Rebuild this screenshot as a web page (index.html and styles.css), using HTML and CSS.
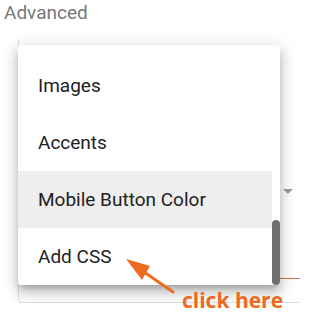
FILE: index.html
```html
<!DOCTYPE html>
<html>
<head>
<meta charset="utf-8">
<link rel="stylesheet" href="styles.css">
</head>
<body>
<div class="page">
  <div class="heading">Advanced</div>
  <div class="area">
    <div class="field">
      <div class="caret"></div>
      <div class="underline"></div>
    </div>
    <div class="menu">
      <ul class="list">
        <li class="item">Images</li>
        <li class="item">Accents</li>
        <li class="item active">Mobile Button Color</li>
        <li class="item">Add CSS</li>
      </ul>
      <div class="track"><div class="thumb"></div></div>
    </div>
  </div>
  <svg class="arrow" width="60" height="45" viewBox="0 0 60 45">
    <line x1="53" y1="40" x2="24" y2="20" stroke="#ee6a1f" stroke-width="3" stroke-linecap="round"/>
    <polygon points="6,7 30,14 22,28" fill="#ee6a1f"/>
  </svg>
  <div class="note">click here</div>
</div>
</body>
</html>
```
FILE: styles.css
```css
html, body {
  margin: 0;
  padding: 0;
  background: #ffffff;
}
.page {
  position: relative;
  width: 300px;
  height: 317px;
  overflow: hidden;
  font-family: Roboto, "Liberation Sans", sans-serif;
}
.heading {
  font-size: 19px;
  line-height: 26px;
  color: #777777;
  padding-left: 4px;
}
.area {
  position: relative;
  padding-top: 14px;
}
.field {
  margin-left: 18px;
  width: 290px;
  height: 263px;
  box-sizing: border-box;
  border: 1px solid #dedede;
  border-top: none;
  border-radius: 0 0 4px 4px;
  background: #ffffff;
  padding-top: 1px;
}
.caret {
  width: 0;
  height: 0;
  margin: 148px 14px 0 auto;
  border-left: 5.5px solid transparent;
  border-right: 5.5px solid transparent;
  border-top: 5px solid #9e9e9e;
}
.underline {
  margin-top: 84px;
  margin-left: 261px;
  height: 1px;
  background: #d9744a;
}
.menu {
  position: absolute;
  left: 18px;
  top: 19px;
  width: 262px;
  height: 240px;
  box-sizing: border-box;
  background: #ffffff;
  border-radius: 3px;
  display: flex;
  box-shadow: 0 5px 6px -3px rgba(0,0,0,0.22), 0 8px 12px 1px rgba(0,0,0,0.14), 0 3px 16px 3px rgba(0,0,0,0.12);
}
.list {
  list-style: none;
  margin: 0;
  padding: 12px 0 0 0;
  flex: 1;
}
.item {
  height: 57px;
  line-height: 57px;
  padding-left: 20px;
  font-size: 19px;
  color: #212121;
  white-space: nowrap;
}
.item.active {
  background: #eeeeee;
}
.track {
  width: 8px;
  padding-top: 175px;
}
.thumb {
  height: 65px;
  border-radius: 4px;
  background: #6f6f6f;
}
.arrow {
  position: absolute;
  left: 120px;
  top: 252px;
}
.note {
  position: absolute;
  left: 182px;
  top: 290px;
  font-family: "Open Sans", "Liberation Sans", sans-serif;
  font-weight: 700;
  font-size: 21px;
  line-height: 21px;
  color: #ee6a1f;
  white-space: nowrap;
}
```
